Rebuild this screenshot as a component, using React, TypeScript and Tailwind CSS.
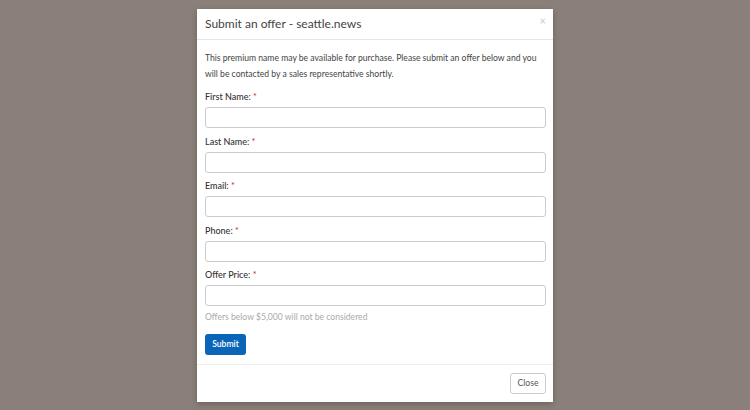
import React from 'react';

const fields = ['First Name:', 'Last Name:', 'Email:', 'Phone:', 'Offer Price:'];

function Field({ label }: { label: string }) {
    return (
        <div className="flex flex-col">
            <label className="h-[14px] text-[9px] font-medium leading-[14px] text-[#333]">
                {label} <span className="text-[#c9302c]">*</span>
            </label>
            <input className="mt-[3px] h-[21px] w-full rounded-[3px] border border-[#ccc] bg-white" />
        </div>
    );
}

export default function App() {
    return (
        <div className="flex h-[410px] w-[750px] justify-center bg-[#8a8079] pt-[9px] font-['Lato',sans-serif]">
            <div className="flex h-[393px] w-[356px] flex-col bg-white shadow-[0_2px_6px_rgba(0,0,0,0.25)]">
                <div className="flex h-[31px] items-center justify-between border-b border-[#e5e5e5] pl-[8px] pr-[7px]">
                    <h4 className="text-[12px] text-[#444]">Submit an offer - seattle.news</h4>
                    <span className="-mt-[5px] text-[11px] text-[#c8c8c8]">×</span>
                </div>
                <div className="flex-1 px-[8px] pr-[7px] pt-[10px]">
                    <p className="text-[8.6px] leading-[16px] text-[#444]">
                        This premium name may be available for purchase. Please submit an offer below and you will be contacted by a sales representative shortly.
                    </p>
                    <div className="mt-[8px] flex flex-col gap-[6.5px]">
                        {fields.map((f) => (
                            <Field key={f} label={f} />
                        ))}
                    </div>
                    <p className="mt-[5px] text-[8.6px] leading-[12px] text-[#aaa]">Offers below $5,000 will not be considered</p>
                    <button className="mt-[11px] h-[21px] w-[41px] rounded-[3px] bg-[#0a64b8] text-[8.6px] font-semibold text-white">
                        Submit
                    </button>
                </div>
                <div className="flex h-[38px] items-center justify-end border-t border-[#eee] pr-[7px]">
                    <button className="h-[21px] w-[36px] rounded-[3px] border border-[#ccc] bg-white text-[8.6px] text-[#555]">
                        Close
                    </button>
                </div>
            </div>
        </div>
    );
}
